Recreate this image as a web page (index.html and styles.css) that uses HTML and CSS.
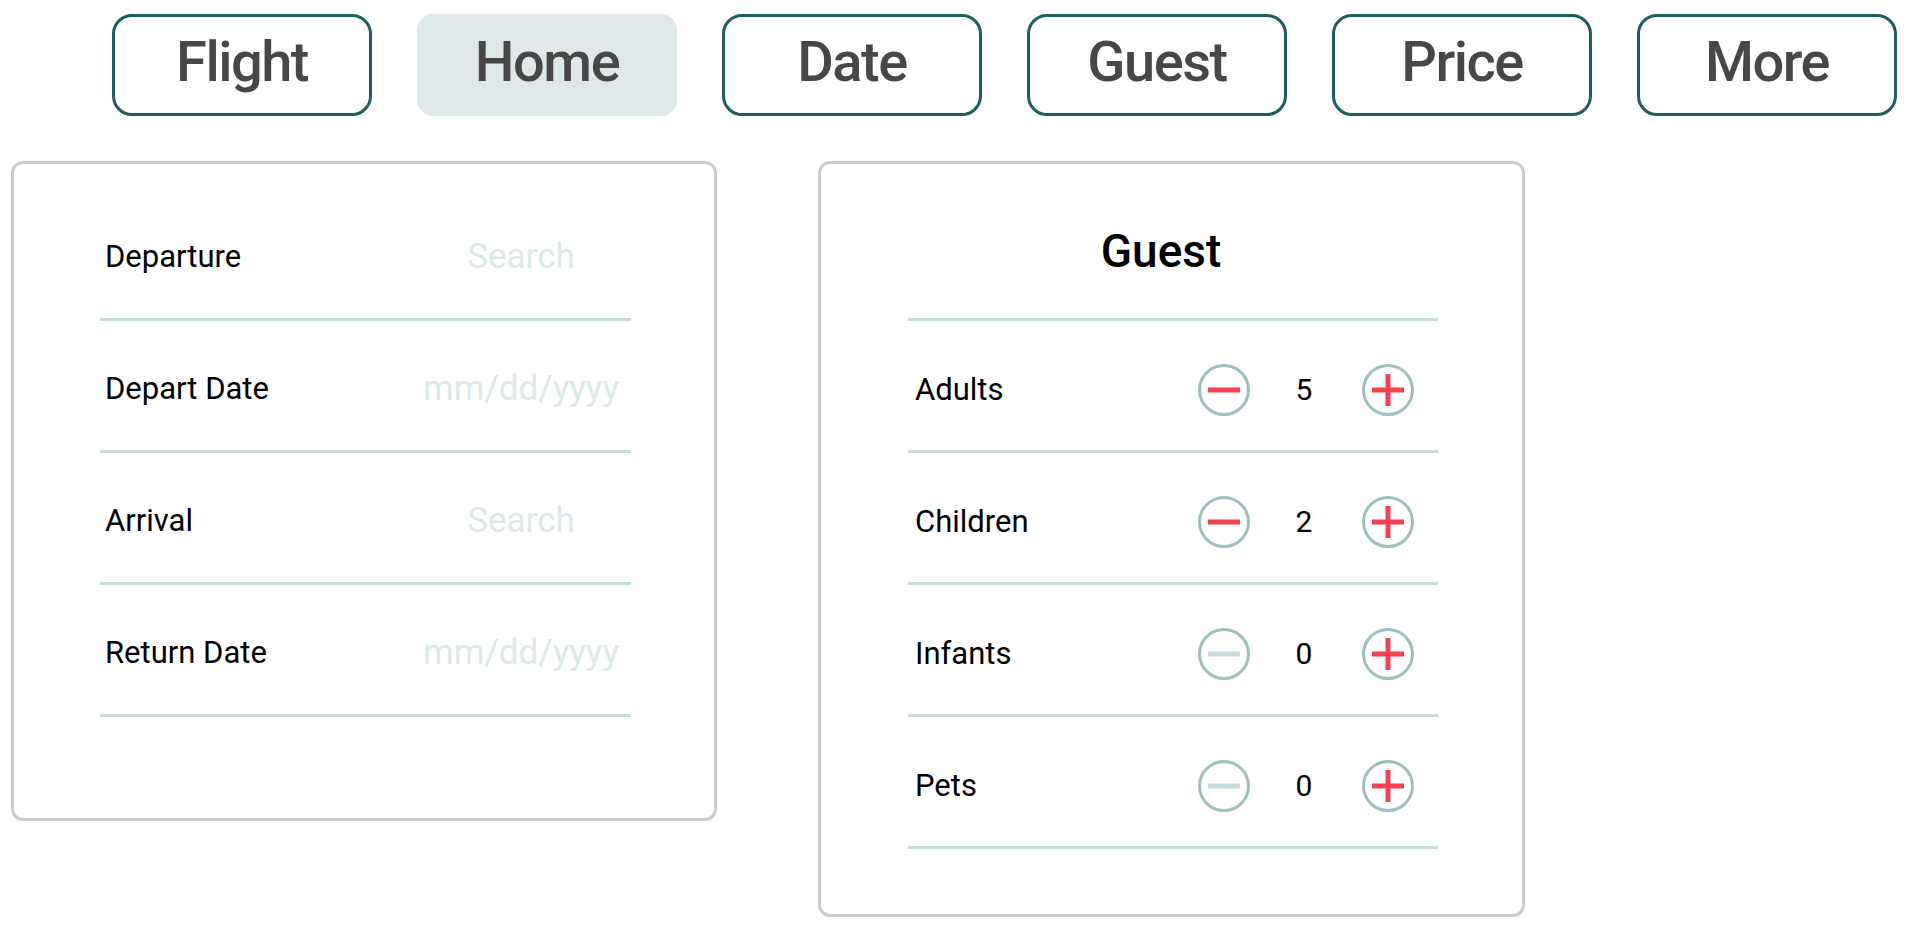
FILE: index.html
```html
<!DOCTYPE html>
<html lang="en">
<head>
<meta charset="utf-8">
<title>Booking</title>
<link rel="stylesheet" href="styles.css">
</head>
<body>
<div class="page">
  <nav class="tabs">
    <button class="tab">Flight</button>
    <button class="tab tab-active">Home</button>
    <button class="tab">Date</button>
    <button class="tab">Guest</button>
    <button class="tab">Price</button>
    <button class="tab">More</button>
  </nav>
  <div class="panels">
    <section class="card flight-card">
      <div class="field"><span class="label">Departure</span><input class="field-input" type="text" placeholder="Search"></div>
      <div class="field"><span class="label">Depart Date</span><input class="field-input" type="text" placeholder="mm/dd/yyyy"></div>
      <div class="field"><span class="label">Arrival</span><input class="field-input" type="text" placeholder="Search"></div>
      <div class="field"><span class="label">Return Date</span><input class="field-input" type="text" placeholder="mm/dd/yyyy"></div>
    </section>
    <section class="card guest-card">
      <h2 class="guest-title">Guest</h2>
      <div class="counter-row">
        <span class="label">Adults</span>
        <div class="stepper">
          <button class="step"><svg viewBox="0 0 52 52" width="52" height="52"><circle cx="26" cy="26" r="24.5" class="ring"/><line x1="10" y1="26" x2="42" y2="26" class="mark"/></svg></button>
          <span class="count">5</span>
          <button class="step"><svg viewBox="0 0 52 52" width="52" height="52"><circle cx="26" cy="26" r="24.5" class="ring"/><line x1="10" y1="26" x2="42" y2="26" class="mark"/><line x1="26" y1="10" x2="26" y2="42" class="mark"/></svg></button>
        </div>
      </div>
      <div class="counter-row">
        <span class="label">Children</span>
        <div class="stepper">
          <button class="step"><svg viewBox="0 0 52 52" width="52" height="52"><circle cx="26" cy="26" r="24.5" class="ring"/><line x1="10" y1="26" x2="42" y2="26" class="mark"/></svg></button>
          <span class="count">2</span>
          <button class="step"><svg viewBox="0 0 52 52" width="52" height="52"><circle cx="26" cy="26" r="24.5" class="ring"/><line x1="10" y1="26" x2="42" y2="26" class="mark"/><line x1="26" y1="10" x2="26" y2="42" class="mark"/></svg></button>
        </div>
      </div>
      <div class="counter-row">
        <span class="label">Infants</span>
        <div class="stepper">
          <button class="step"><svg viewBox="0 0 52 52" width="52" height="52"><circle cx="26" cy="26" r="24.5" class="ring"/><line x1="10" y1="26" x2="42" y2="26" class="mark mark-off"/></svg></button>
          <span class="count">0</span>
          <button class="step"><svg viewBox="0 0 52 52" width="52" height="52"><circle cx="26" cy="26" r="24.5" class="ring"/><line x1="10" y1="26" x2="42" y2="26" class="mark"/><line x1="26" y1="10" x2="26" y2="42" class="mark"/></svg></button>
        </div>
      </div>
      <div class="counter-row">
        <span class="label">Pets</span>
        <div class="stepper">
          <button class="step"><svg viewBox="0 0 52 52" width="52" height="52"><circle cx="26" cy="26" r="24.5" class="ring"/><line x1="10" y1="26" x2="42" y2="26" class="mark mark-off"/></svg></button>
          <span class="count">0</span>
          <button class="step"><svg viewBox="0 0 52 52" width="52" height="52"><circle cx="26" cy="26" r="24.5" class="ring"/><line x1="10" y1="26" x2="42" y2="26" class="mark"/><line x1="26" y1="10" x2="26" y2="42" class="mark"/></svg></button>
        </div>
      </div>
    </section>
  </div>
</div>
</body>
</html>
```
FILE: styles.css
```css
* { box-sizing: border-box; }
html, body { margin: 0; padding: 0; background: #ffffff; }
body { font-family: Roboto, "Liberation Sans", Arial, sans-serif; color: #000; }

.page { padding: 14px 0 0 11px; }

.tabs { display: flex; gap: 45px; margin-left: 101px; }
.tab {
  width: 260px; height: 102px;
  border: 3px solid #1f5e5f; border-radius: 20px;
  background: #fff; color: #474747;
  font-family: Roboto, "Liberation Sans", Arial, sans-serif; font-size: 56px; font-weight: 500;
  letter-spacing: -1.5px;
  display: flex; align-items: center; justify-content: center;
  padding: 0 0 6px 0; margin: 0; cursor: pointer;
}
.tab-active { background: #dfe8e8; border-color: #dfe8e8; border-radius: 16px; }

.panels { display: flex; align-items: flex-start; gap: 101px; margin-top: 45px; }

.card { border: 3px solid #cccccc; border-radius: 12px; background: #fff; }
.flight-card { width: 706px; height: 660px; padding: 25px 83px 0 86px; }
.guest-card { width: 707px; height: 756px; padding: 0 84px 0 87px; }

.field {
  height: 132px; border-bottom: 3px solid #c6dcdc;
  display: flex; align-items: center; justify-content: space-between;
  padding: 6px 0 0 5px;
}
.label { font-size: 31px; font-weight: 400; color: #000; }
.field-input {
  width: 220px; border: none; outline: none; background: transparent;
  font-family: Roboto, "Liberation Sans", Arial, sans-serif; font-size: 35px; font-weight: 400;
  text-align: center; padding: 0; color: #000;
}
.field-input::placeholder { color: #dde8e8; }

.guest-title {
  height: 157px; margin: 0; border-bottom: 3px solid #c6dcdc;
  display: flex; align-items: center; justify-content: center;
  padding: 20px 24px 0 0;
  font-size: 46px; font-weight: 500; color: #000;
}
.counter-row {
  height: 132px; border-bottom: 3px solid #c6dcdc;
  display: flex; align-items: center; justify-content: space-between;
  padding: 8px 24px 0 7px;
}
.stepper { display: flex; align-items: center; }
.step { width: 52px; height: 52px; padding: 0; margin: 0; border: none; background: none; display: block; cursor: pointer; }
.step svg { display: block; }
.ring { fill: none; stroke: #9fbfbf; stroke-width: 3; }
.mark { stroke: #f5414f; stroke-width: 5; }
.mark-off { stroke: #c6dcdc; }
.count { width: 112px; text-align: center; font-size: 30px; font-weight: 400; color: #000; padding-right: 4px; }
```
